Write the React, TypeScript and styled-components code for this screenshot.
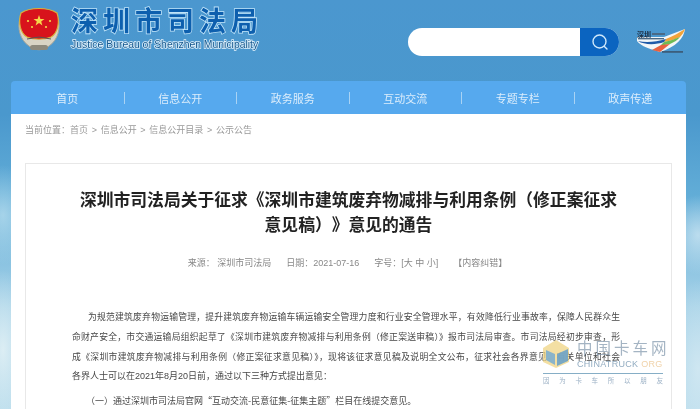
import styled, { createGlobalStyle } from "styled-components";

const GlobalStyle = createGlobalStyle`
html, body {
  margin: 0;
  padding: 0;
  background: #4a98cf;
}
* {
  box-sizing: border-box;
}
`;

const CJK = `"Liberation Sans", "Noto Sans CJK SC", sans-serif`;

const Page = styled.div`
position: relative;
width: 700px;
height: 409px;
overflow: hidden;
font-family: ${CJK};
padding: 0 14px 0 11px;
background:
  radial-gradient(ellipse 30px 50px at 3px 215px, rgba(190, 225, 240, 0.7), transparent),
  radial-gradient(ellipse 26px 80px at 3px 350px, rgba(225, 240, 245, 0.9), transparent),
  radial-gradient(ellipse 30px 40px at 698px 235px, rgba(215, 235, 245, 0.7), transparent),
  radial-gradient(ellipse 30px 90px at 698px 370px, rgba(210, 232, 242, 0.9), transparent),
  linear-gradient(180deg, #4b97cf 0%, #4a98cd 28%, #62add7 48%, #a6d2e8 75%, #b8dcec 100%);
`;

const Blur = styled.div`
filter: blur(0.4px);
`;

const Header = styled.header`
height: 81px;
display: flex;
align-items: flex-start;
`;

const Emblem = styled.svg`
width: 44px;
height: 46px;
margin: 6px 0 0 6px;
flex: none;
`;

const Brand = styled.div`
margin: 7px 0 0 10px;
width: 200px;
`;

const BrandName = styled.div`
font-size: 27px;
line-height: 31px;
font-weight: 700;
letter-spacing: 5px;
color: #0d5fae;
white-space: nowrap;
-webkit-text-stroke: 1.6px #bfe3f8;
paint-order: stroke fill;
`;

const BrandEnglish = styled.div`
font-size: 10.4px;
line-height: 13px;
color: #15588f;
white-space: nowrap;
-webkit-text-stroke: 1.5px #e3f2fb;
paint-order: stroke fill;
`;

const Search = styled.form`
margin: 28px 0 0 140px;
width: 211px;
height: 28px;
display: flex;
border-radius: 14px;
overflow: hidden;
background: #fff;
flex: none;
`;

const SearchInput = styled.div`
flex: 1;
`;

const SearchButton = styled.div`
width: 39px;
background: #0b64c0;
display: flex;
align-items: center;
justify-content: center;
`;

const PartnerLogo = styled.svg`
width: 50px;
height: 28px;
margin: 28px 0 0 17px;
flex: none;
`;

const Nav = styled.nav`
height: 33px;
display: grid;
grid-template-columns: repeat(6, 1fr);
background: #56a9ee;
border-radius: 4px 4px 0 0;
align-items: center;
`;

const NavItem = styled.a<{ $first?: boolean }>`
height: 12px;
display: flex;
align-items: center;
justify-content: center;
font-size: 11px;
color: #dcedfb;
border-left: ${(p) => (p.$first ? "none" : "1px solid #a9d3f4")};
`;

const Main = styled.main`
background: #fff;
height: 295px;
padding: 0 14px;
`;

const Breadcrumb = styled.div`
height: 49px;
padding-top: 9px;
font-size: 9px;
line-height: 14px;
color: #999;
word-spacing: 1.2px;
`;

const Article = styled.article`
border: 1px solid #e8e8e8;
border-bottom: none;
height: 246px;
padding: 0 46px;
`;

const Title = styled.h1`
margin: 24px 0 0;
font-size: 16.8px;
line-height: 25px;
font-weight: 700;
color: #222;
text-align: center;
white-space: nowrap;
`;

const TitleTail = styled.span`
text-spacing-trim: space-all;
`;

const Meta = styled.div`
margin-top: 18px;
display: flex;
justify-content: center;
gap: 15px;
font-size: 9px;
line-height: 14px;
color: #888;
padding-right: 2px;
`;

const Body = styled.div`
margin-top: 38px;
line-height: 19.8px;
color: #484848;
width: 548px;
`;

const Para = styled.p`
margin: 0 0 4px;
`;

const Line = styled.span<{ $indent?: number; $fill?: boolean }>`
display: block;
padding-left: ${(p) => p.$indent ?? 0}px;
font-size: ${(p) => (p.$fill ? "8.8px" : "9px")};
text-align: justify;
text-align-last: ${(p) => (p.$fill ? "justify" : "left")};
text-justify: inter-character;
text-spacing-trim: ${(p) => (p.$fill ? "normal" : "space-all")};
`;

const Quoted = styled.span`
font-family: "Noto Sans CJK SC", sans-serif;
`;

const Watermark = styled.div`
position: absolute;
left: 543px;
top: 340px;
width: 120px;
filter: blur(0.35px);
`;

const WaterTop = styled.div`
display: flex;
align-items: flex-start;
gap: 8px;
height: 33px;
`;

const WaterIcon = styled.svg`
width: 26px;
height: 28px;
flex: none;
`;

const WaterName = styled.div`
font-size: 15.5px;
line-height: 18px;
letter-spacing: 3px;
color: rgba(125, 148, 170, 0.7);
white-space: nowrap;
`;

const WaterUrl = styled.div`
font-size: 9px;
line-height: 12px;
letter-spacing: 0.3px;
color: rgba(140, 168, 190, 0.95);
white-space: nowrap;
span {
  color: rgba(238, 205, 160, 0.9);
}
`;

const WaterLine = styled.div`
border-top: 1px solid #86aec6;
height: 1px;
`;

const WaterSlogan = styled.div`
margin-top: 2px;
display: flex;
justify-content: space-between;
font-size: 6.5px;
line-height: 9px;
color: rgba(140, 165, 188, 0.85);
`;

const navItems = ["首页", "信息公开", "政务服务", "互动交流", "专题专栏", "政声传递"];

export default function App() {
  return (
    <Page>
      <GlobalStyle />
      <Blur>
        <Header>
          <Emblem viewBox="0 0 44 46">
            <path d="M3 12 C0 22 3 34 12 40 C18 45 26 45 32 40 C41 34 44 22 41 12 L34 26 L10 26 Z" fill="#d9d4c4" stroke="#a8a698" strokeWidth="1" />
            <path d="M4 7 C13 1 31 1 40 7 C43 16 41 27 34 31 C27 34 17 34 10 31 C3 27 1 16 4 7 Z" fill="#d8131c" stroke="#d9b23c" strokeWidth="1.2" />
            <polygon points="22,9 23.4,13 27.5,13 24.2,15.5 25.4,19.5 22,17 18.6,19.5 19.8,15.5 16.5,13 20.6,13" fill="#f6d84a" />
            <circle cx="11" cy="15" r="1.1" fill="#f6d84a" />
            <circle cx="33" cy="15" r="1.1" fill="#f6d84a" />
            <circle cx="15" cy="21" r="1.1" fill="#f6d84a" />
            <circle cx="29" cy="21" r="1.1" fill="#f6d84a" />
            <path d="M10 33 L22 31 L34 33" fill="none" stroke="#555" strokeWidth="1" />
            <rect x="13" y="39" width="18" height="5" rx="2.5" fill="#8e8a7c" />
          </Emblem>
          <Brand>
            <BrandName>深圳市司法局</BrandName>
            <BrandEnglish>Justice Bureau of Shenzhen Municipality</BrandEnglish>
          </Brand>
          <Search>
            <SearchInput />
            <SearchButton>
              <svg width="18" height="18" viewBox="0 0 18 18" fill="none" stroke="#cfe8fb" strokeWidth="1.4">
                <circle cx="8.5" cy="8.5" r="6.5" />
                <path d="M13.4 13.4 L16 16" strokeLinecap="round" />
              </svg>
            </SearchButton>
          </Search>
          <PartnerLogo viewBox="0 0 50 28">
            <path d="M1 9 L28 9 L49 1 C48 10 40 19 24 24 L18 22 C10 20 4 17 1 13 Z" fill="#f2f6f8" />
            <path d="M30 11 C37 8 43 5 49 1 C48 4 46 7 44 9 C38 12 33 13 28 14 Z" fill="#f2a33a" />
            <path d="M28 14 C34 13 38 11 44 9 C42 12 38 14 34 16 C30 17 27 17 25 17 Z" fill="#6dbb55" />
            <path d="M2 13 C10 15 20 14 30 11 L28 14 C20 17 8 17 2 13 Z" fill="#1f5aa8" />
            <path d="M16 22 L25 17 L34 16 L24 24 Z" fill="#e8603f" />
            <text x="1" y="9" fontSize="7" fontWeight="700" fill="#1d3147">深圳</text>
            <rect x="16" y="5" width="13" height="2" fill="#4a6a86" />
            <rect x="2" y="10" width="26" height="1.4" fill="#4a6a86" />
            <rect x="26" y="23" width="21" height="1.8" fill="#3c5e7c" />
          </PartnerLogo>
        </Header>
        <Nav>
          {navItems.map((item, i) => (
            <NavItem key={item} $first={i === 0}>{item}</NavItem>
          ))}
        </Nav>
        <Main>
          <Breadcrumb>当前位置：首页 &gt; 信息公开 &gt; 信息公开目录 &gt; 公示公告</Breadcrumb>
          <Article>
            <Title>
              深圳市司法局关于征求《深圳市建筑废弃物减排与利用条例（修正案征求
              <br />
              <TitleTail>意见稿）》意见的通告</TitleTail>
            </Title>
            <Meta>
              <span>来源： 深圳市司法局</span>
              <span>日期：2021-07-16</span>
              <span>字号：[大 中 小]</span>
              <span>【内容纠错】</span>
            </Meta>
            <Body>
              <Para>
                <Line $indent={16} $fill>为规范建筑废弃物运输管理，提升建筑废弃物运输车辆运输安全管理力度和行业安全管理水平，有效降低行业事故率，保障人民群众生</Line>
                <Line $fill>命财产安全，市交通运输局组织起草了《深圳市建筑废弃物减排与利用条例（修正案送审稿）》报市司法局审查。市司法局经初步审查，形</Line>
                <Line $fill>成《深圳市建筑废弃物减排与利用条例（修正案征求意见稿）》，现将该征求意见稿及说明全文公布，征求社会各界意见。有关单位和社会</Line>
                <Line>各界人士可以在2021年8月20日前，通过以下三种方式提出意见：</Line>
              </Para>
              <Para>
                <Line $indent={14}>（一）通过深圳市司法局官网<Quoted>“互动交流-民意征集-征集主题”</Quoted>栏目在线提交意见。</Line>
              </Para>
            </Body>
          </Article>
        </Main>
      </Blur>
      <Watermark>
        <WaterTop>
          <WaterIcon viewBox="0 0 26 28">
            <polygon points="13,0 26,8 26,22 13,28 0,22 0,8" fill="#eed27c" opacity="0.7" />
            <polygon points="3,10 12,14 12,25 3,20" fill="#7fb0cf" opacity="0.9" />
            <polygon points="14,14 25,9 25,21 14,26" fill="#6ea3c8" opacity="0.9" />
          </WaterIcon>
          <div>
            <WaterName>中国卡车网</WaterName>
            <WaterUrl>CHINATRUCK <span>ORG</span></WaterUrl>
          </div>
        </WaterTop>
        <WaterLine />
        <WaterSlogan>
          {"因为卡车所以朋友".split("").map((c, i) => (
            <span key={i}>{c}</span>
          ))}
        </WaterSlogan>
      </Watermark>
    </Page>
  );
}
